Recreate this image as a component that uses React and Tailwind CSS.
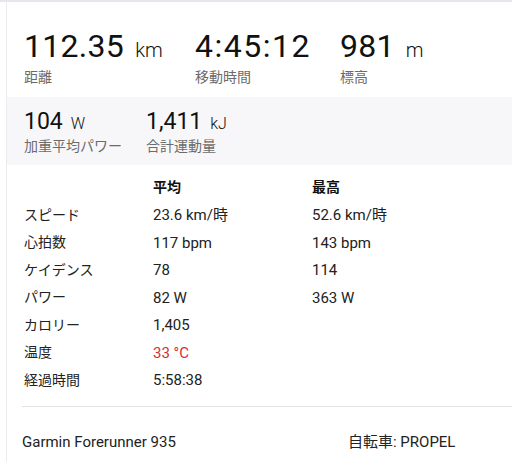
import React from 'react';

const font = { fontFamily: 'Roboto, "Noto Sans CJK JP", sans-serif' };

const topStats = [
  { value: '112.35', unit: 'km', label: '距離', w: 'w-[171px]', t: 'tracking-[0.3px]' },
  { value: '4:45:12', unit: '', label: '移動時間', w: 'w-[145px]', t: 'tracking-[1.5px]' },
  { value: '981', unit: 'm', label: '標高', w: '', t: 'tracking-[0.3px]' },
];

const subStats = [
  { value: '104', unit: 'W', label: '加重平均パワー', w: 'w-[122px]' },
  { value: '1,411', unit: 'kJ', label: '合計運動量', w: '' },
];

const rows = [
  { label: 'スピード', avg: '23.6 km/時', max: '52.6 km/時' },
  { label: '心拍数', avg: '117 bpm', max: '143 bpm' },
  { label: 'ケイデンス', avg: '78', max: '114' },
  { label: 'パワー', avg: '82 W', max: '363 W' },
  { label: 'カロリー', avg: '1,405', max: '' },
  { label: '温度', avg: '33 °C', max: '', hot: true },
  { label: '経過時間', avg: '5:58:38', max: '' },
];

const App = () => {
  return (
    <div className="w-[512px] h-[462px] bg-white overflow-hidden text-[#222]" style={font}>
      <div className="h-[2px] bg-[#e6e6ec]" />
      <div className="ml-[6px] border-l border-[#ebebeb] h-[460px]">
        {/* main stats */}
        <div className="flex pl-[17px] pt-[28px] pb-[10px]">
          {topStats.map((s) => (
            <div key={s.label} className={s.w}>
              <div className="flex items-baseline leading-none text-[#111]">
                <span className={`text-[32px] ${s.t}`}>{s.value}</span>
                {s.unit && <span className="text-[20px] ml-[11px] font-light">{s.unit}</span>}
              </div>
              <div className="mt-[5px] text-[14px] leading-[20px] text-[#6b6b6b]">{s.label}</div>
            </div>
          ))}
        </div>

        {/* power band */}
        <div className="flex bg-[#f7f7fa] pl-[17px] pt-[13px] pb-[9px]">
          {subStats.map((s) => (
            <div key={s.label} className={s.w}>
              <div className="flex items-baseline leading-none text-[#111]">
                <span className="text-[23px]">{s.value}</span>
                <span className="text-[16px] ml-[8px] font-light">{s.unit}</span>
              </div>
              <div className="mt-[3px] text-[14px] leading-[20px] text-[#6b6b6b]">{s.label}</div>
            </div>
          ))}
        </div>

        {/* avg / max table */}
        <div className="pl-[17px] pt-[9px] text-[15px]">
          <div className="grid grid-cols-[129px_159px_1fr] h-[27.5px] items-center font-bold text-[14px] text-[#111]">
            <span />
            <span>平均</span>
            <span>最高</span>
          </div>
          {rows.map((r) => (
            <div key={r.label} className="grid grid-cols-[129px_159px_1fr] h-[27.5px] items-center">
              <span className="text-[14px] text-[#222]">{r.label}</span>
              <span className={r.hot ? 'text-[#d32f2f]' : ''}>{r.avg}</span>
              <span>{r.max}</span>
            </div>
          ))}
        </div>

        <div className="ml-[15px] mt-[12px] border-t border-[#e2e2e2]" />

        {/* footer */}
        <div className="flex pl-[15px] pt-[25px] text-[15px] leading-[20px]">
          <span className="w-[326px]">Garmin Forerunner 935</span>
          <span>自転車: PROPEL</span>
        </div>
      </div>
    </div>
  );
};

export default App;
